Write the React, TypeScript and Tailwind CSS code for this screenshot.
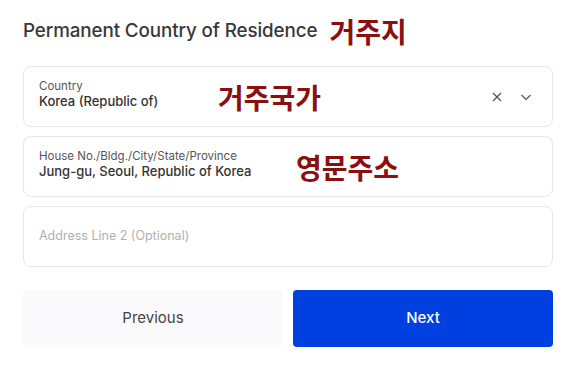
import React from "react";

const KR = "font-['Noto_Sans_CJK_KR','Noto_Sans',sans-serif] font-bold text-[#8a1010] text-[28px] leading-none";

export default function App() {
  return (
    <div className="w-[580px] h-[386px] bg-white px-[23px] pt-[13px] font-['Inter',sans-serif] text-[#333]">
      <div className="flex items-center h-[36px] gap-[12px]">
        <span className="text-[18.8px] font-medium text-[#383838] tracking-[-0.1px]">Permanent Country of Residence</span>
        <span className={KR}>거주지</span>
      </div>

      <div className="mt-[17px] w-[530px] flex flex-col gap-[9px]">
        <div className="h-[61px] rounded-[8px] border border-[#e6e6e9] pl-[15px] pr-[20px] flex items-center">
          <div className="w-[179px] flex flex-col pb-[5px]">
            <span className="text-[11.5px] leading-[14px] text-[#555]">Country</span>
            <span className="text-[13px] leading-[16px] font-medium text-[#333]">Korea (Republic of)</span>
          </div>
          <span className={KR}>거주국가</span>
          <div className="ml-auto flex items-center gap-[17px] text-[#555]">
            <svg width="12" height="12" viewBox="0 0 12 12" fill="none" stroke="currentColor" strokeWidth="1.3">
              <path d="M2 2L10 10M10 2L2 10" />
            </svg>
            <svg width="12" height="12" viewBox="0 0 12 12" fill="none" stroke="currentColor" strokeWidth="1.2">
              <path d="M1.5 4L6 8.5L10.5 4" />
            </svg>
          </div>
        </div>

        <div className="h-[61px] rounded-[8px] border border-[#e6e6e9] pl-[15px] pr-[20px] flex items-center">
          <div className="w-[257px] flex flex-col pb-[5px]">
            <span className="text-[11.5px] leading-[14px] text-[#555]">House No./Bldg./City/State/Province</span>
            <span className="text-[13px] leading-[16px] font-medium text-[#333]">Jung-gu, Seoul, Republic of Korea</span>
          </div>
          <span className={KR}>영문주소</span>
        </div>

        <div className="h-[61px] rounded-[8px] border border-[#e6e6e9] pl-[15px] pr-[20px] flex items-center">
          <span className="text-[12.5px] text-[#b0b0b0]">Address Line 2 (Optional)</span>
        </div>
      </div>

      <div className="mt-[23px] w-[530px] grid grid-cols-2 gap-[10px]">
        <button className="h-[57px] rounded-[4px] bg-[#fafafd] text-[15px] text-[#444]">Previous</button>
        <button className="h-[57px] rounded-[4px] bg-[#0040e0] text-[15px] font-medium text-white">Next</button>
      </div>
    </div>
  );
}
